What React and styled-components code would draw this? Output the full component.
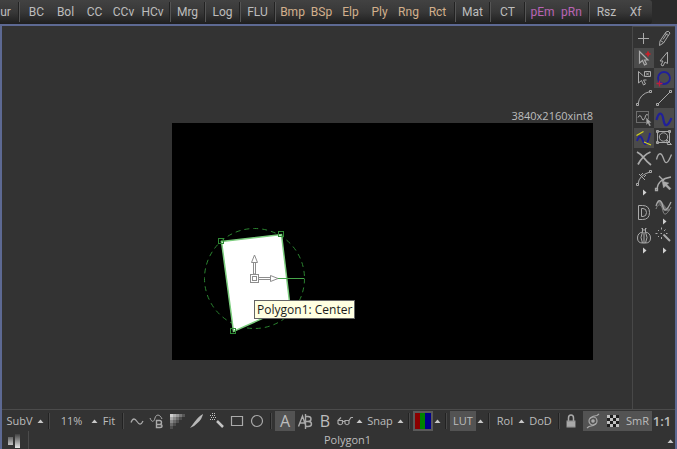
import React from 'react';
import styled, { createGlobalStyle, css } from 'styled-components';

const GlobalStyle = createGlobalStyle`
  * { box-sizing: border-box; }
  body {
    margin: 0;
    background: #333333;
    color: #bdbdbd;
    font-family: 'Open Sans', 'Noto Sans', sans-serif;
    font-size: 11px;
  }
  button { font: inherit; color: inherit; border: 0; padding: 0; margin: 0; background: none; cursor: pointer; }
  svg { display: block; }
`;

const Shell = styled.div`
  min-height: 100vh;
  display: flex;
  flex-direction: column;
  overflow: hidden;
`;

const NodeBar = styled.header`
  display: flex;
  height: 24px;
  background: #2b2b2b;
  overflow: hidden;
`;

const NodeGroups = styled.nav`
  display: flex;
  border-radius: 0 3px 3px 0;
  background: linear-gradient(#424242, #383838 50%, #1e1e1e);
`;

const NodeGroup = styled.div`
  display: flex;
  align-items: center;
  flex: none;
  padding: 0 2px;
  ${(p) => p.$edge && css`
    width: 18px;
    padding: 0;
  `}
`;

const NodeDivider = styled.span`
  flex: none;
  width: 2px;
  margin: 2px 0;
  background: linear-gradient(90deg, #222222 50%, #555555 50%);
`;

const NodeButton = styled.button`
  flex: none;
  width: ${(p) => (p.$narrow ? 11 : 29)}px;
  height: 24px;
  font-family: Roboto, sans-serif;
  font-size: 12px;
  line-height: 24px;
  color: ${(p) => p.$tone};
`;

const Workspace = styled.main`
  flex: 1;
  display: flex;
  flex-direction: column;
  border: solid #5d6993;
  border-width: 2px 2px 0 2px;
`;

const ViewArea = styled.div`
  flex: 1;
  display: flex;
`;

const Stage = styled.section`
  flex: 1;
  padding: 82px 39px 48px 170px;
`;

const FormatLabel = styled.div`
  height: 15px;
  line-height: 16px;
  text-align: right;
  white-space: nowrap;
`;

const Frame = styled.div`
  position: relative;
  background: #000000;
  svg { width: 100%; height: auto; }
`;

const Tooltip = styled.div`
  position: absolute;
  left: 19.5%;
  top: 74.7%;
  height: 19px;
  padding: 0 2px;
  border: 1px solid #646464;
  background: #ffffe1;
  color: #1c1c1c;
  font-size: 12px;
  line-height: 18px;
  white-space: nowrap;
`;

const Palette = styled.aside`
  display: grid;
  grid-template-columns: 20px 20px;
  grid-template-rows: repeat(7, 20px) repeat(3, 29px);
  padding: 1px 1px 0;
  border: solid #484848;
  border-width: 1px 0 0 1px;
`;

const Tool = styled.button`
  display: flex;
  flex-direction: column;
  align-items: center;
  justify-content: center;
  background: ${(p) => (p.$active ? '#4b4b4b' : 'none')};
`;

const MenuMark = styled.span`
  height: 9px;
  padding-top: 1px;
`;

const ViewBar = styled.div`
  display: flex;
  align-items: center;
  height: 22px;
  padding: 0 0 0 1px;
  border-top: 1px solid #4b4b4b;
`;

const BarButton = styled.button`
  flex: none;
  display: flex;
  align-items: center;
  justify-content: center;
  width: ${(p) => p.$w || 20}px;
  height: 20px;
  font-size: ${(p) => p.$size || 11}px;
  font-weight: ${(p) => (p.$strong ? 600 : 400)};
  line-height: 20px;
  white-space: nowrap;
  background: ${(p) => (p.$active ? '#535353' : 'none')};
`;

const ArrowButton = styled(BarButton)`
  width: 9px;
`;

const BarDivider = styled.span`
  flex: none;
  width: 2px;
  height: 16px;
  margin: 0 3px;
  background: linear-gradient(90deg, #222222 50%, #484848 50%);
`;

const StatusBar = styled.footer`
  display: flex;
  height: 18px;
`;

const LevelsButton = styled.button`
  width: 26px;
  padding: 3px 0 0 5px;
`;

const StatusText = styled.div`
  flex: 1;
  text-align: center;
  line-height: 18px;
  border-left: 1px solid #4b4b4b;
`;

const Swatches = styled.span`
  width: 20px;
  height: 20px;
  border: 2px solid #5a5a5a;
  background: linear-gradient(90deg, #8a0000 0 5px, #008200 5px 10px, #00008c 10px);
`;

const GREY = '#bdbdbd';
const TAN = '#d3b08c';
const PINK = '#b964b4';

const groups = [
  { tone: GREY, items: ['BC', 'Bol', 'CC', 'CCv', 'HCv'] },
  { tone: GREY, items: ['Mrg'] },
  { tone: GREY, items: ['Log'] },
  { tone: GREY, items: ['FLU'] },
  { tone: TAN, items: ['Bmp', 'BSp', 'Elp', 'Ply', 'Rng', 'Rct'] },
  { tone: GREY, items: ['Mat'] },
  { tone: GREY, items: ['CT'] },
  { tone: PINK, items: ['pEm', 'pRn'] },
  { tone: GREY, items: ['Rsz', 'Xf'] },
];

const Icon = ({ children, w = 1 }) => (
  <svg width="20" height="20" viewBox="0 0 20 20" fill="none" stroke="#aaaaaa" strokeWidth={w} aria-hidden="true">
    {children}
  </svg>
);

const UpMark = () => (
  <svg width="7" height="6" viewBox="0 0 7 6" aria-hidden="true"><path d="M3.5 1.500 6.500 5h-6z" fill="#c8c8c8" /></svg>
);

const tools = [
  { name: 'Add', icon: <Icon><path d="M9.500 5v11M4 10.500h11" /></Icon> },
  { name: 'Pencil', icon: <Icon><path d="M5.500 17.500l.5-4.500 6-9q2.500-2 4 1l-6.500 10zM6.500 12.500l3 2M11 5.500l3.500 2M9 11.500l4-6" /></Icon> },
  { name: 'Select and edit', active: true, icon: <Icon><path d="M5.500 3.500v11.500l3-2.500 2 4.500 2-1-2-4h3.500z" strokeWidth="1.200" /><path d="M14 3.500v5M11.500 6h5" stroke="#d21e28" strokeWidth="1.600" /></Icon> },
  { name: 'Select', icon: <Icon><path d="M13.500 4v11.500l-2.500-1.500-2 4-2-1 2-4H6z" /></Icon> },
  { name: 'Deselect', icon: <Icon><path d="M9.500 8 4.500 3.500V15l3-2.500 2 4.500 2-1-2-4h3" /><path d="M10.500 3.500h6v5h-6zM12 4.500l3 3M15 4.500l-3 3" /></Icon> },
  { name: 'Rotate', active: true, icon: <Icon><circle cx="10" cy="10" r="6" stroke="#20209a" strokeWidth="1.800" /><path d="M5.500 12.500v6M2.500 15.500h6" stroke="#c01e3c" strokeWidth="1.300" /></Icon> },
  { name: 'Arc', icon: <Icon><path d="M4 16Q5.500 6 16 3.500" /><path d="M2.500 15.500h2v2h-2zM15.500 2.500h2v2h-2z" /></Icon> },
  { name: 'Line', icon: <Icon><path d="M4 16 16 4" /><path d="M2.500 15.500h2v2h-2zM15.500 2.500h2v2h-2z" /></Icon> },
  { name: 'Region select', icon: <Icon><path d="M2.500 13.500v-10h12v8M2.500 14.500h9" strokeDasharray="1 1" /><path d="M4 9.500q2-4 3.500 0t2.500 2q1-1 1.500-3.500t2.500-1" /><path d="M12.500 10v6.500l1.500-1.500 1.500 3 1-.5-1.500-3h2z" fill="#aaaaaa" strokeWidth=".3" /></Icon> },
  { name: 'Smooth curve', active: true, icon: <Icon><path d="M2.500 12c2-8 5.500-9 7 0s5 5 8-2" stroke="#20209a" strokeWidth="2.200" /></Icon> },
  { name: 'Tangents', active: true, icon: <Icon><path d="M3 13c2-6 4-6 6 0s5 3 7-8" stroke="#20209a" strokeWidth="1.800" /><path d="M2.500 7.500l7-4M10 14l7 3" stroke="#d2d21e" strokeWidth="1.200" /></Icon> },
  { name: 'Bounding box', icon: <Icon><path d="M3.500 3.500h12v11h-12z" /><circle cx="9.500" cy="9" r="4.200" /><path d="M2.500 2.500h2v2h-2zM14.500 2.500h2v2h-2zM2.500 13.500h2v2h-2zM12.500 11.500l5 5h-4z" /></Icon> },
  { name: 'Delete', icon: <Icon><path d="M3 4Q7 6 10 10t7 7M16.500 4Q9 7 4 16.500" strokeWidth="1.800" /></Icon> },
  { name: 'Curve', icon: <Icon><path d="M2.500 11.500c2-8 5-7 7-1s4 6 8-4" strokeWidth="1.300" /></Icon> },
  { name: 'Break curve', menu: true, icon: <Icon><path d="M4 16Q5 7 16 4M5 6l6 6M2.500 15.500h2v2h-2zM15.500 2.500h2v2h-2zM7 7l2-2M10 9l2-2" /></Icon> },
  { name: 'Adjust curve', icon: <Icon><path d="M3 16Q4 6 17 4M5 3l5 5M1.500 15.500h2v2h-2z" strokeWidth="1.300" /><path d="M8 8l1.500 7 2-2 4 4 1.500-1.500-4-4 2-1.500z" fill="#aaaaaa" strokeWidth=".3" /></Icon> },
  { name: 'D shape', icon: <Icon><path d="M4.500 3.500h4q7 0 7 7t-7 7h-4zM7.500 6.500h1.500q3.500 0 3.500 4t-3.500 4H7.500z" /></Icon> },
  { name: 'Offset curve', menu: true, icon: <Icon><path d="M4 5c5-1 6 11 11 7" stroke="#6d6d6d" strokeWidth="3" /><path d="M2 9c3-10 6-4 7 1s4 4 8-5" strokeWidth="1.300" /><path d="M2 12c3-8 6-3 7 2s4 4 8-4" stroke="#888888" /></Icon> },
  { name: 'Onion skin', menu: true, icon: <Icon><path d="M8.500 2v4q-5 1-5 6 0 5 5 5h3q5 0 5-5 0-5-5-6V2M7.500 2l2.500 2.500L12.500 2M8.500 6q-3 5.500 0 11M11.500 6q3 5.500 0 11M10 6v11" /></Icon> },
  { name: 'Magic wand', menu: true, icon: <Icon><path d="M9.500 8.500l6.500 6.500" strokeWidth="2" /><path d="M7.500 1.500v2M7.500 11v2M1.500 7.500h2M10 5l1.500-1.500M4 4l1 1M4 11l1-1M6.500 7.500h1.500M12 7.500h1.500" /></Icon> },
];

const Handle = ({ x, y }) => <rect x={x - 2} y={y - 2} width="5" height="5" fill="none" stroke="#2f8a34" />;

const Scene = () => (
  <svg viewBox="0 0 421 237" role="img" aria-label="Polygon1 with centre manipulator">
    <circle cx="82.500" cy="155.500" r="50" fill="none" stroke="#2b8430" strokeDasharray="5 4" />
    <path d="M49.500 118.500 109.500 111.500 118 183 61.500 208.500z" fill="#ffffff" stroke="#7ccd7e" strokeWidth="1.500" />
    <Handle x={48.500} y={117.500} /><Handle x={108.500} y={110.500} /><Handle x={60.500} y={207.500} />
    <path d="M105 155.500h27" stroke="#46a54a" />
    <g fill="#ffffff" stroke="#8d8d8d">
      <path d="M81.500 151v-12h2v12zM86 154.500h13v2H86z" />
      <path d="M79.500 139.500 82.500 132l3 7.500zM98.500 152.500l7.500 3-7.500 3z" />
      <rect x="78.500" y="151.500" width="8" height="8" /><rect x="80.500" y="153.500" width="4" height="4" />
    </g>
  </svg>
);

const Checker = () => (
  <Icon w={0}>
    {[0, 1, 2, 3].flatMap((r) => [0, 1, 2, 3].map((c) => (
      <rect key={`${r}${c}`} x={4 + c * 3} y={4 + r * 3} width="3" height="3" fill={(r + c) % 2 ? '#1d1d1d' : '#c0c0c0'} />
    )))}
  </Icon>
);

const ramp = [[0, 0, '#cfcfcf'], [1, 0, '#b0b0b0'], [2, 0, '#989898'], [3, 0, '#777777'], [4, 0, '#575757'], [0, 1, '#aaaaaa'], [1, 1, '#8a8a8a'], [2, 1, '#6c6c6c'], [3, 1, '#4c4c4c'], [0, 2, '#8a8a8a'], [1, 2, '#6a6a6a'], [2, 2, '#505050'], [0, 3, '#6a6a6a'], [1, 3, '#4c4c4c'], [0, 4, '#4f4f4f']];

const drawTools = [
  ['Curve', <Icon w={1.300}><path d="M4 11.500c2-5 4-4 6-1s4 4 6-.5" /></Icon>],
  ['Curve B', <Icon><path d="M3 7c2 5 4 4 5 0s5-4 7 1" w="1.200" /><path d="M9.500 9.500h3q2 0 2 2t-2 2h-3zM9.500 13.500h3.500q2 0 2 1.500t-2 1.500H9.500z" strokeWidth="1.400" /></Icon>],
  ['Ramp', <Icon w={0}>{ramp.map(([x, y, f]) => <rect key={`${x}-${y}`} x={3 + x * 3} y={3 + y * 3} width="3" height="3" fill={f} />)}</Icon>],
  ['Brush', <Icon w={0}><path d="M3 17 7.500 11Q12 5 16 3q-1 5-5 8.500-3 3.500-8 5.500z" fill="#b8b8b8" /></Icon>],
  ['Wand', <Icon><path d="M10 10l6 6" stroke="#c4c4c4" strokeWidth="2.500" /><path d="M3 4.500h6M3 8.500h6M4 6.500h6M5 2.500h3" strokeDasharray="1 1" stroke="#c4c4c4" /></Icon>],
  ['Rectangle', <Icon w={1.200}><path d="M4.500 5.500h11v9h-11z" /></Icon>],
  ['Ellipse', <Icon w={1.200}><circle cx="10" cy="10" r="5.500" /></Icon>],
];

const Arrow = ({ label }) => <ArrowButton aria-label={label}><UpMark /></ArrowButton>;

export default function App() {
  return (
    <Shell>
      <GlobalStyle />
      <NodeBar>
        <NodeGroups aria-label="Nodes">
          <NodeGroup $edge><NodeButton $narrow $tone={GREY}>ur</NodeButton></NodeGroup>
          {groups.map((g) => (
            <React.Fragment key={g.items[0]}>
              <NodeDivider />
              <NodeGroup>
                {g.items.map((t) => <NodeButton key={t} $tone={g.tone}>{t}</NodeButton>)}
              </NodeGroup>
            </React.Fragment>
          ))}
        </NodeGroups>
      </NodeBar>
      <Workspace>
        <ViewArea>
          <Stage>
            <FormatLabel>3840x2160xint8</FormatLabel>
            <Frame>
              <Scene />
              <Tooltip role="tooltip">Polygon1: Center</Tooltip>
            </Frame>
          </Stage>
          <Palette aria-label="Tools">
            {tools.map((t) => (
              <Tool key={t.name} aria-label={t.name} aria-pressed={!!t.active} $active={t.active}>
                {t.icon}
                {t.menu && (
                  <MenuMark>
                    <svg width="5" height="7" viewBox="0 0 5 7"><path d="M1 .5 4.500 3.500 1 6.500z" fill="#d0d0d0" /></svg>
                  </MenuMark>
                )}
              </Tool>
            ))}
          </Palette>
        </ViewArea>
        <ViewBar>
          <BarButton $w={33}>SubV</BarButton>
          <Arrow label="Subview options" />
          <BarDivider />
          <BarButton $w={37}>11%</BarButton>
          <Arrow label="Zoom options" />
          <BarButton>Fit</BarButton>
          <BarDivider />
          {drawTools.map(([n, icon]) => <BarButton key={n} aria-label={n}>{icon}</BarButton>)}
          <BarDivider />
          <BarButton $active $size={16}>A</BarButton>
          <BarButton aria-label="A and B">
            <Icon w={1.400}><path d="M3.500 15.500 7.500 5l3.500 10.500M5 12h5M10.500 3v15M10.500 5.500H13q3 0 3 2.500t-3 2.500h-2.500M13 10.500q3.500 0 3.500 2.500T13 15.500h-2.500" /></Icon>
          </BarButton>
          <BarButton $size={16}>B</BarButton>
          <BarButton aria-label="Stereo">
            <Icon w={1.200}><path d="M3 9.500 6 6.500M3 9.500h4.500v3q-2 2.500-4.500 0zM10 9.500h4v3q-2 2.500-4 0zM7.500 10.500H10M14 9.500l2-3h2" /></Icon>
          </BarButton>
          <Arrow label="Stereo options" />
          <BarButton $w={32}>Snap</BarButton>
          <Arrow label="Snap options" />
          <BarDivider />
          <BarButton aria-label="Channels"><Swatches /></BarButton>
          <Arrow label="Channel options" />
          <BarDivider />
          <BarButton $w={26} $active>LUT</BarButton>
          <Arrow label="LUT options" />
          <BarDivider />
          <BarButton $w={24}>RoI</BarButton>
          <Arrow label="Region options" />
          <BarButton $w={29}>DoD</BarButton>
          <BarDivider />
          <BarButton aria-label="Lock">
            <Icon w={1.500}>
              <path d="M5.500 10V7q0-3 2.500-3t2.500 3v3" />
              <path d="M3.500 9.500h9v7h-9z" fill="#9a9a9a" stroke="none" />
              <path d="M4 12h8M4 14h8" stroke="#b8b8b8" strokeWidth="1" />
            </Icon>
          </BarButton>
          <BarButton $active aria-label="Motion blur">
            <Icon w={1.200}><circle cx="10" cy="10" r="4" /><circle cx="10" cy="10" r="1.200" fill="#aaaaaa" /><path d="M7 7.500q3-3 7-3l2-1.500M13 12.500q-3 3-7 3l-2 1.500" /></Icon>
          </BarButton>
          <BarButton $active aria-label="Checkerboard"><Checker /></BarButton>
          <BarButton $active $w={29}>SmR</BarButton>
          <BarButton $size={13} $strong>1:1</BarButton>
        </ViewBar>
        <StatusBar>
          <LevelsButton aria-label="Levels">
            <svg width="14" height="15" viewBox="0 0 14 15">
              <defs><linearGradient id="lv" x2="0" y2="1"><stop offset="0" stopColor="#404040" /><stop offset="1" stopColor="#e6e6e6" /></linearGradient></defs>
              <path d="M1 3h5v8H1zM8 0h5v14H8z" fill="url(#lv)" />
            </svg>
          </LevelsButton>
          <StatusText>Polygon1</StatusText>
          <Arrow label="Expand panel" />
        </StatusBar>
      </Workspace>
    </Shell>
  );
}
